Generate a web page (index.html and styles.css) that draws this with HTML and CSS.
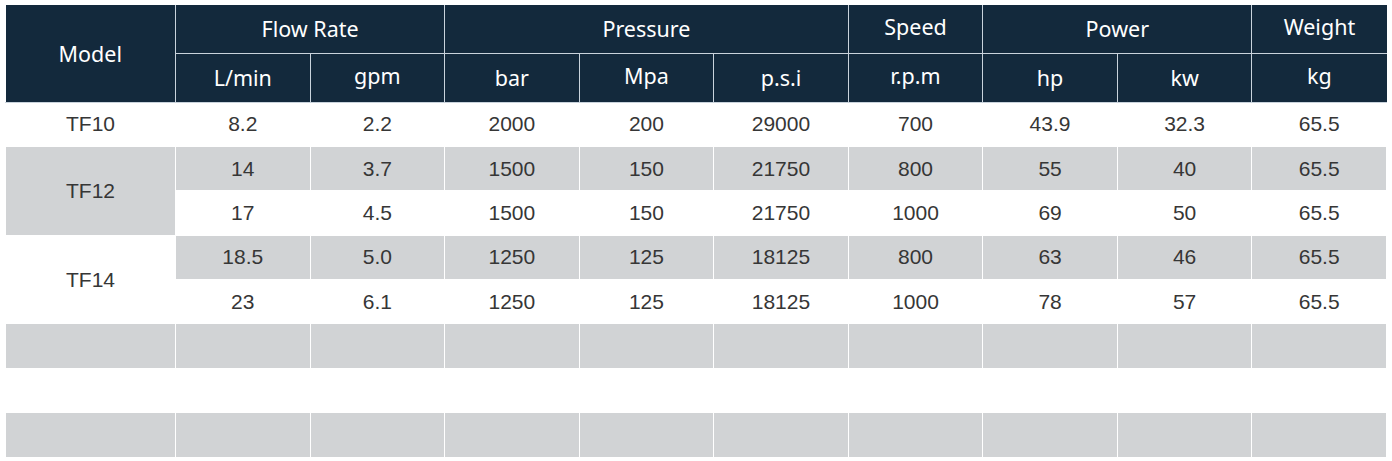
FILE: index.html
```html
<!DOCTYPE html>
<html>
<head>
<meta charset="utf-8">
<link rel="stylesheet" href="styles.css">
</head>
<body>
<table class="spec">
  <colgroup>
    <col class="c-model">
    <col><col><col><col><col><col><col><col><col>
  </colgroup>
  <thead>
    <tr class="h1">
      <th rowspan="2">Model</th>
      <th colspan="2">Flow Rate</th>
      <th colspan="3">Pressure</th>
      <th class="up">Speed</th>
      <th colspan="2">Power</th>
      <th class="up">Weight</th>
    </tr>
    <tr class="h2">
      <th>L/min</th>
      <th class="up">gpm</th>
      <th>bar</th>
      <th class="up">Mpa</th>
      <th>p.s.i</th>
      <th class="up">r.p.m</th>
      <th>hp</th>
      <th>kw</th>
      <th class="up">kg</th>
    </tr>
  </thead>
  <tbody>
    <tr class="w">
      <td>TF10</td><td>8.2</td><td>2.2</td><td>2000</td><td>200</td><td>29000</td><td>700</td><td>43.9</td><td>32.3</td><td>65.5</td>
    </tr>
    <tr class="g">
      <td rowspan="2" class="gcell">TF12</td><td>14</td><td>3.7</td><td>1500</td><td>150</td><td>21750</td><td>800</td><td>55</td><td>40</td><td>65.5</td>
    </tr>
    <tr class="w">
      <td>17</td><td>4.5</td><td>1500</td><td>150</td><td>21750</td><td>1000</td><td>69</td><td>50</td><td>65.5</td>
    </tr>
    <tr class="g">
      <td rowspan="2" class="wcell">TF14</td><td>18.5</td><td>5.0</td><td>1250</td><td>125</td><td>18125</td><td>800</td><td>63</td><td>46</td><td>65.5</td>
    </tr>
    <tr class="w">
      <td>23</td><td>6.1</td><td>1250</td><td>125</td><td>18125</td><td>1000</td><td>78</td><td>57</td><td>65.5</td>
    </tr>
    <tr class="g">
      <td></td><td></td><td></td><td></td><td></td><td></td><td></td><td></td><td></td><td></td>
    </tr>
    <tr class="w">
      <td></td><td></td><td></td><td></td><td></td><td></td><td></td><td></td><td></td><td></td>
    </tr>
    <tr class="g">
      <td></td><td></td><td></td><td></td><td></td><td></td><td></td><td></td><td></td><td></td>
    </tr>
  </tbody>
</table>
</body>
</html>
```

FILE: styles.css
```css
html, body {
  margin: 0;
  padding: 0;
  background: #ffffff;
}
body {
  padding: 5px;
}
.spec {
  width: 1382px;
  table-layout: fixed;
  border-collapse: collapse;
  font-family: "Liberation Sans", Arial, sans-serif;
}
.c-model {
  width: 170px;
}
.spec th {
  background: #13293c;
  color: #ffffff;
  font-family: "Noto Sans", "Open Sans", sans-serif;
  font-weight: 400;
  font-size: 21.5px;
  border: 1px solid #c9d3dc;
  padding: 0;
  text-align: center;
  vertical-align: middle;
}
.spec thead tr:first-child th {
  border-top: none;
}
.spec th:first-child {
  border-left: none;
}
.spec th:last-child {
  border-right: none;
}
.h1 {
  height: 48px;
}
.h2 {
  height: 49px;
}
.spec th.up {
  padding-bottom: 4px;
}
.spec td {
  font-size: 21px;
  color: #363636;
  text-align: center;
  vertical-align: middle;
  padding: 0;
  border: 1px solid #ffffff;
}
.spec tbody tr {
  height: 44.4px;
}
.spec tbody tr.g td {
  background: #d1d3d5;
}
.spec tbody tr.w td {
  background: #ffffff;
}
.spec tbody td.gcell {
  background: #d1d3d5;
}
.spec tbody tr.g td.wcell {
  background: #ffffff;
}
```
